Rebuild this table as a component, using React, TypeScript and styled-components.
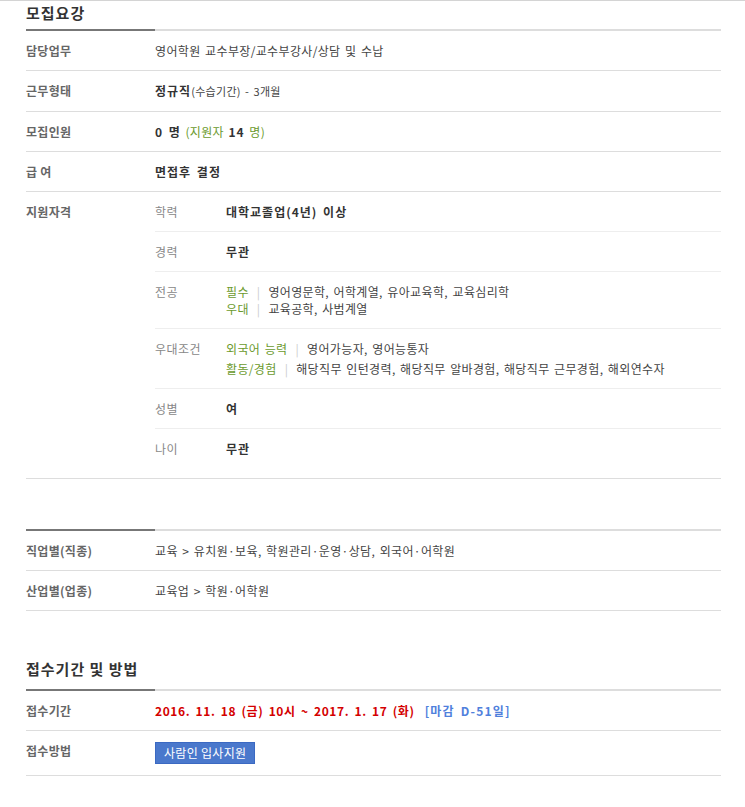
import React from 'react'
import styled, { createGlobalStyle } from 'styled-components'

const GlobalStyle = createGlobalStyle`
    body {
        margin: 0;
        background: #fff;
        font-family: 'Noto Sans CJK KR', 'Noto Sans', sans-serif;
        font-size: 12px;
        color: #444;
    }
`

const Page = styled.div`
    border-top: 1px solid #d4d4d4;
    padding: 0 24px 0 26px;
`
const Section = styled.section<{ $gap?: number }>`
    width: 695px;
    margin-top: ${(p) => p.$gap || 0}px;
`
const Title = styled.h3<{ $first?: boolean }>`
    margin: 0;
    font-size: 15px;
    font-weight: 700;
    color: #333;
    line-height: 20px;
    padding: ${(p) => (p.$first ? '2px 0 6px' : '0 0 10px')};
    letter-spacing: 1px;
`
const Bar = styled.div`
    height: 2px;
    background: linear-gradient(to right, #777 129px, #ddd 129px);
`
const Row = styled.div<{ $pad?: number }>`
    display: flex;
    border-bottom: 1px solid #ddd;
    padding-bottom: ${(p) => p.$pad || 0}px;
`
const Label = styled.div`
    width: 129px;
    flex-shrink: 0;
    padding: 11px 0;
    line-height: 17px;
    font-weight: 700;
    color: #666;
    letter-spacing: 0.3px;
`
const Value = styled.div`
    flex: 1;
    padding: 11px 0;
    line-height: 17px;
    color: #444;
    letter-spacing: 0.35px;
    word-spacing: 1.5px;
`
const SubList = styled.div`
    flex: 1;
`
const SubRow = styled.div`
    display: flex;
    border-bottom: 1px solid #eee;
    &:last-child {
        border-bottom: none;
    }
`
const SubLabel = styled.div`
    width: 71px;
    flex-shrink: 0;
    padding: 11px 0;
    line-height: 17px;
    color: #888;
    letter-spacing: 0.5px;
`
const SubValue = styled(Value)<{ $gap?: number }>`
    display: flex;
    flex-direction: column;
    gap: ${(p) => p.$gap || 0}px;
`
const Strong = styled.b`
    font-weight: 700;
    color: #333;
    letter-spacing: 1px;
    word-spacing: 2px;
`
const Small = styled.span`
    font-size: 11px;
    color: #444;
    letter-spacing: 0.3px;
`
const Green = styled.span`
    color: #6b9a2d;
`
const Pipe = styled.span`
    color: #ccc;
    margin: 0 8px;
`
const Red = styled.span`
    color: #d40000;
    font-weight: 700;
    letter-spacing: 0.6px;
    word-spacing: 2px;
`
const Blue = styled.span`
    color: #4f80dc;
    font-weight: 700;
    margin-left: 10px;
    letter-spacing: 1.2px;
    word-spacing: 2px;
`
const ApplyButton = styled.button`
    height: 22px;
    padding: 0 8px;
    border: 1px solid #3b69c2;
    background: #4a78cc;
    color: #fff;
    font-family: inherit;
    font-size: 12px;
    line-height: 20px;
    letter-spacing: 0.3px;
    cursor: pointer;
`

const App: React.FC = () => {
    return (
        <Page>
            <GlobalStyle />
            <Section>
                <Title $first>모집요강</Title>
                <Bar />
                <Row>
                    <Label>담당업무</Label>
                    <Value>영어학원 교수부장/교수부강사/상담 및 수납</Value>
                </Row>
                <Row>
                    <Label>근무형태</Label>
                    <Value>
                        <Strong>정규직</Strong>
                        <Small>(수습기간) - 3개월</Small>
                    </Value>
                </Row>
                <Row>
                    <Label>모집인원</Label>
                    <Value>
                        <Strong>0 명</Strong> <Green>(지원자</Green> <Strong>14</Strong> <Green>명)</Green>
                    </Value>
                </Row>
                <Row>
                    <Label>급 여</Label>
                    <Value>
                        <Strong>면접후 결정</Strong>
                    </Value>
                </Row>
                <Row $pad={10}>
                    <Label>지원자격</Label>
                    <SubList>
                        <SubRow>
                            <SubLabel>학력</SubLabel>
                            <SubValue>
                                <Strong>대학교졸업(4년) 이상</Strong>
                            </SubValue>
                        </SubRow>
                        <SubRow>
                            <SubLabel>경력</SubLabel>
                            <SubValue>
                                <Strong>무관</Strong>
                            </SubValue>
                        </SubRow>
                        <SubRow>
                            <SubLabel>전공</SubLabel>
                            <SubValue>
                                <div>
                                    <Green>필수</Green>
                                    <Pipe>|</Pipe>영어영문학, 어학계열, 유아교육학, 교육심리학
                                </div>
                                <div>
                                    <Green>우대</Green>
                                    <Pipe>|</Pipe>교육공학, 사범계열
                                </div>
                            </SubValue>
                        </SubRow>
                        <SubRow>
                            <SubLabel>우대조건</SubLabel>
                            <SubValue $gap={3}>
                                <div>
                                    <Green>외국어 능력</Green>
                                    <Pipe>|</Pipe>영어가능자, 영어능통자
                                </div>
                                <div>
                                    <Green>활동/경험</Green>
                                    <Pipe>|</Pipe>해당직무 인턴경력, 해당직무 알바경험, 해당직무 근무경험, 해외연수자
                                </div>
                            </SubValue>
                        </SubRow>
                        <SubRow>
                            <SubLabel>성별</SubLabel>
                            <SubValue>
                                <Strong>여</Strong>
                            </SubValue>
                        </SubRow>
                        <SubRow>
                            <SubLabel>나이</SubLabel>
                            <SubValue>
                                <Strong>무관</Strong>
                            </SubValue>
                        </SubRow>
                    </SubList>
                </Row>
            </Section>

            <Section $gap={50}>
                <Bar />
                <Row>
                    <Label>직업별(직종)</Label>
                    <Value>교육 &gt; 유치원·보육, 학원관리·운영·상담, 외국어·어학원</Value>
                </Row>
                <Row>
                    <Label>산업별(업종)</Label>
                    <Value>교육업 &gt; 학원·어학원</Value>
                </Row>
            </Section>

            <Section $gap={48}>
                <Title>접수기간 및 방법</Title>
                <Bar />
                <Row>
                    <Label>접수기간</Label>
                    <Value>
                        <Red>2016. 11. 18 (금) 10시 ~ 2017. 1. 17 (화)</Red>
                        <Blue>[마감 D-51일]</Blue>
                    </Value>
                </Row>
                <Row>
                    <Label>접수방법</Label>
                    <Value>
                        <ApplyButton type="button">사람인 입사지원</ApplyButton>
                    </Value>
                </Row>
            </Section>
        </Page>
    )
}

export default App
